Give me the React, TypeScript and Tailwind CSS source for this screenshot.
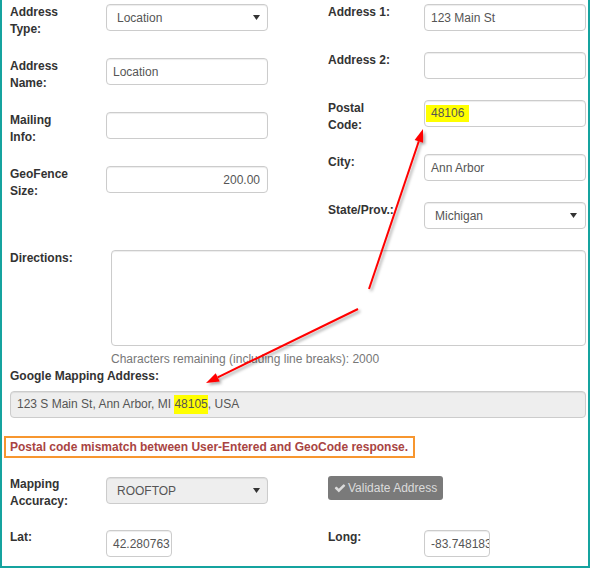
import React from 'react';

const box =
  'h-[27px] border border-[#cccccc] rounded-[4px] shadow-[inset_0_1px_1px_rgba(0,0,0,0.075)] text-[#555] flex items-center overflow-hidden whitespace-nowrap';

function Caret() {
  return (
    <svg width="7" height="5" viewBox="0 0 7 5" className="shrink-0">
      <path d="M0 0h7L3.5 5z" fill="#333" />
    </svg>
  );
}

function Label({ children, w = 'w-[96px]' }: { children: React.ReactNode; w?: string }) {
  return <div className={`${w} shrink-0 font-bold leading-[17px] text-[#333]`}>{children}</div>;
}

function Select({ value, disabled, pr = 'pr-[7px]' }: { value: string; disabled?: boolean; pr?: string }) {
  return (
    <div className={`${box} w-[162px] justify-between pl-[10px] ${pr} ${disabled ? 'bg-[#eeeeee]' : 'bg-white'}`}>
      <span>{value}</span>
      <Caret />
    </div>
  );
}

function Input({ value, w = 'w-[162px]', align = 'left' }: { value?: string; w?: string; align?: 'left' | 'right' }) {
  return (
    <div className={`${box} bg-white ${w} ${align === 'right' ? 'justify-end pr-[7px]' : 'pl-[6px]'}`}>
      <span>{value}</span>
    </div>
  );
}

function CheckIcon() {
  return (
    <svg width="12" height="12" viewBox="0 0 1792 1792" className="shrink-0">
      <path
        fill="currentColor"
        d="M1671 566q0 40-28 68l-724 724-136 136q-28 28-68 28t-68-28l-136-136-362-362q-28-28-28-68t28-68l136-136q28-28 68-28t68 28l294 295 656-657q28-28 68-28t68 28l136 136q28 28 28 68z"
      />
    </svg>
  );
}

function Arrows() {
  return (
    <svg width="590" height="568" className="absolute -left-[2px] top-0 pointer-events-none">
      <defs>
        <filter id="sh" x="-20%" y="-20%" width="140%" height="140%">
          <feDropShadow dx="2" dy="2" stdDeviation="1.5" floodColor="#000" floodOpacity="0.35" />
        </filter>
      </defs>
      <g filter="url(#sh)">
        <line x1="369" y1="289" x2="418.8" y2="141.3" stroke="#ff0000" strokeWidth="2" />
        <polygon points="423,129 423.1,142.7 414.6,139.9" fill="#ff0000" />
        <line x1="358" y1="309" x2="217.7" y2="377.3" stroke="#ff0000" strokeWidth="2" />
        <polygon points="206,383 219.7,381.4 215.7,373.3" fill="#ff0000" />
      </g>
    </svg>
  );
}

export default function App() {
  return (
    <div className="relative w-[590px] h-[568px] bg-white border-x-2 border-b-2 border-[#15a39f] overflow-hidden font-['Liberation_Sans',Arial,sans-serif] text-[12px] text-[#333]">
      <div className="pl-[8px] pt-[4px]">
        {/* top two columns */}
        <div className="grid grid-cols-[258px_258px] gap-x-[60px]">
          <div className="flex flex-col">
            <div className="flex items-start h-[54px]">
              <Label>Address<br />Type:</Label>
              <Select value="Location" />
            </div>
            <div className="flex items-start h-[54px]">
              <Label>Address<br />Name:</Label>
              <Input value="Location" />
            </div>
            <div className="flex items-start h-[54px]">
              <Label>Mailing<br />Info:</Label>
              <Input />
            </div>
            <div className="flex items-start h-[54px]">
              <Label>GeoFence<br />Size:</Label>
              <Input value="200.00" align="right" />
            </div>
          </div>
          <div className="flex flex-col">
            <div className="flex items-start h-[48px]">
              <Label>Address 1:</Label>
              <Input value="123 Main St" />
            </div>
            <div className="flex items-start h-[48px]">
              <Label>Address 2:</Label>
              <Input />
            </div>
            <div className="flex items-start h-[54px]">
              <Label>Postal<br />Code:</Label>
              <div className={`${box} bg-white w-[162px] pl-px`}>
                <span className="bg-[#ffff00] px-[5px] leading-[17px]">48106</span>
              </div>
            </div>
            <div className="flex items-start h-[48px]">
              <Label>City:</Label>
              <Input value="Ann Arbor" />
            </div>
            <div className="flex items-start h-[48px]">
              <Label>State/Prov.:</Label>
              <Select value="Michigan" pr="pr-[8px]" />
            </div>
          </div>
        </div>

        {/* directions */}
        <div className="flex items-start">
          <Label w="w-[101px]">Directions:</Label>
          <div className="w-[475px] h-[96px] border border-[#cccccc] rounded-[4px] bg-white shadow-[inset_0_1px_1px_rgba(0,0,0,0.075)]" />
        </div>
        <div className="pl-[101px] mt-[5px] leading-[17px] text-[#777]">
          Characters remaining (including line breaks): 2000
        </div>

        <div className="font-bold leading-[17px]">Google Mapping Address:</div>
        <div className={`${box} w-[576px] mt-[6px] pl-[6px] bg-[#eeeeee]`}>
          <span>
            123 S Main St, Ann Arbor, MI <span className="bg-[#ffff00] leading-[19px] inline-block">48105</span>, USA
          </span>
        </div>

        <div className="mt-[18px] -ml-[6px] w-fit border-2 border-[#f7962f] pl-[4px] pr-[5px] h-[22px] flex items-center font-bold text-[#a94442] leading-[17px]">
          Postal code mismatch between User-Entered and GeoCode response.
        </div>

        {/* bottom two columns */}
        <div className="grid grid-cols-[258px_258px] gap-x-[60px] mt-[18px]">
          <div className="flex items-start h-[53px]">
            <Label>Mapping<br />Accuracy:</Label>
            <div className="mt-px">
              <Select value="ROOFTOP" disabled />
            </div>
          </div>
          <div className="flex items-start h-[53px]">
            <button className="h-[24px] px-[6px] flex items-center gap-[2px] rounded-[3px] bg-[#7a7a7a] text-[#dcdcdc] text-[12px] cursor-not-allowed">
              <CheckIcon />
              Validate Address
            </button>
          </div>
          <div className="flex items-start">
            <Label>Lat:</Label>
            <div className="mt-px">
              <Input value="42.280763" w="w-[66px]" />
            </div>
          </div>
          <div className="flex items-start">
            <Label>Long:</Label>
            <div className="mt-px">
              <Input value="-83.748183" w="w-[66px]" />
            </div>
          </div>
        </div>
      </div>
      <Arrows />
    </div>
  );
}
